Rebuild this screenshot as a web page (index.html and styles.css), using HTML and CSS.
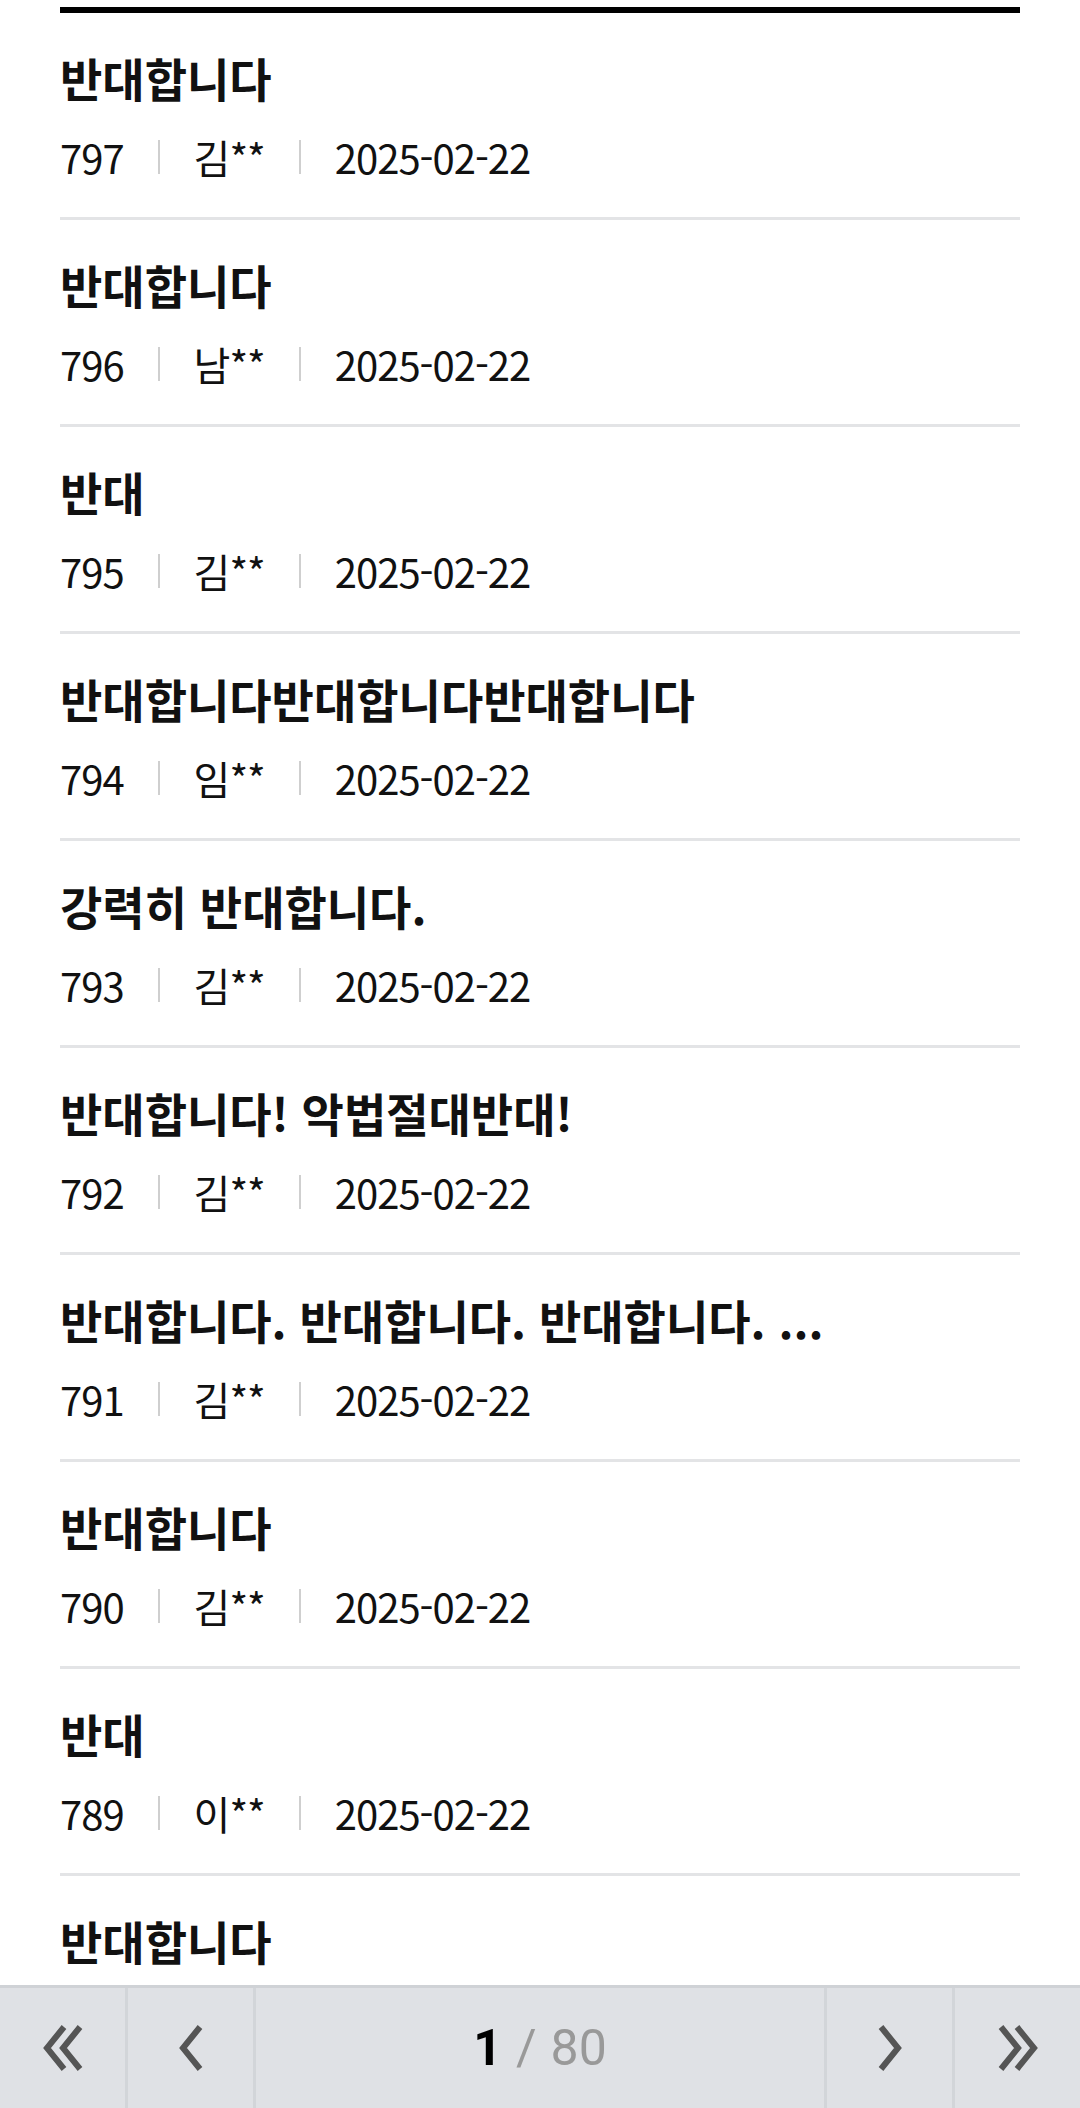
FILE: index.html
```html
<!DOCTYPE html>
<html lang="ko">
<head>
  <meta charset="UTF-8">
  <title>의견 목록</title>
  <meta name="viewport" content="width=device-width, initial-scale=1.0">
  <link rel="stylesheet" href="styles.css">
</head>
<body>
  <!-- 의견 목록 -->
  <main class="board">
    <ul class="post-list">
      <li class="post">
        <p class="post-title">반대합니다</p>
        <p class="post-meta"><span>797</span><i class="bar"></i><span>김**</span><i class="bar"></i><span>2025-02-22</span></p>
      </li>
      <li class="post">
        <p class="post-title">반대합니다</p>
        <p class="post-meta"><span>796</span><i class="bar"></i><span>남**</span><i class="bar"></i><span>2025-02-22</span></p>
      </li>
      <li class="post">
        <p class="post-title">반대</p>
        <p class="post-meta"><span>795</span><i class="bar"></i><span>김**</span><i class="bar"></i><span>2025-02-22</span></p>
      </li>
      <li class="post">
        <p class="post-title">반대합니다반대합니다반대합니다</p>
        <p class="post-meta"><span>794</span><i class="bar"></i><span>임**</span><i class="bar"></i><span>2025-02-22</span></p>
      </li>
      <li class="post">
        <p class="post-title">강력히 반대합니다.</p>
        <p class="post-meta"><span>793</span><i class="bar"></i><span>김**</span><i class="bar"></i><span>2025-02-22</span></p>
      </li>
      <li class="post">
        <p class="post-title">반대합니다! 악법절대반대!</p>
        <p class="post-meta"><span>792</span><i class="bar"></i><span>김**</span><i class="bar"></i><span>2025-02-22</span></p>
      </li>
      <li class="post">
        <p class="post-title">반대합니다. 반대합니다. 반대합니다. ...</p>
        <p class="post-meta"><span>791</span><i class="bar"></i><span>김**</span><i class="bar"></i><span>2025-02-22</span></p>
      </li>
      <li class="post">
        <p class="post-title">반대합니다</p>
        <p class="post-meta"><span>790</span><i class="bar"></i><span>김**</span><i class="bar"></i><span>2025-02-22</span></p>
      </li>
      <li class="post">
        <p class="post-title">반대</p>
        <p class="post-meta"><span>789</span><i class="bar"></i><span>이**</span><i class="bar"></i><span>2025-02-22</span></p>
      </li>
      <li class="post">
        <p class="post-title">반대합니다</p>
        <p class="post-meta"><span>788</span><i class="bar"></i><span>박**</span><i class="bar"></i><span>2025-02-22</span></p>
      </li>
    </ul>
  </main>

  <!-- 하단 페이지 이동 -->
  <nav class="pager">
    <a class="pager-btn" href="#" aria-label="처음">
      <svg width="42" height="46" viewBox="0 0 42 46"><polyline points="22,2 5,23 22,44" /><polyline points="38,2 21,23 38,44" /></svg>
    </a>
    <a class="pager-btn" href="#" aria-label="이전">
      <svg width="26" height="46" viewBox="0 0 26 46"><polyline points="22,2 5,23 22,44" /></svg>
    </a>
    <div class="pager-count"><b>1</b><span class="slash">/</span><span class="total">80</span></div>
    <a class="pager-btn" href="#" aria-label="다음">
      <svg width="26" height="46" viewBox="0 0 26 46"><polyline points="4,2 21,23 4,44" /></svg>
    </a>
    <a class="pager-btn" href="#" aria-label="마지막">
      <svg width="42" height="46" viewBox="0 0 42 46"><polyline points="4,2 21,23 4,44" /><polyline points="20,2 37,23 20,44" /></svg>
    </a>
  </nav>
</body>
</html>
```

FILE: styles.css
```css
body {
  margin: 0;
  background: #fff;
  color: #111;
  font-family: "Noto Sans CJK KR", "Noto Sans", sans-serif;
}

/* List */
.board {
  padding: 7px 60px 0;
}
.post-list {
  list-style: none;
  margin: 0;
  padding: 0;
  border-top: 6px solid #000;
}
.post {
  padding: 36px 0 36px;
  border-bottom: 3px solid #e3e4e6;
}
.post-title {
  margin: 0;
  font-size: 46px;
  font-weight: 700;
  line-height: 56px;
  white-space: nowrap;
}
.post-meta {
  margin: 28px 0 0;
  display: flex;
  align-items: center;
  font-size: 40px;
  line-height: 48px;
  letter-spacing: -1px;
}
.post-meta .bar {
  width: 2px;
  height: 34px;
  margin: 0 34px;
  background: #cfcfcf;
}

/* Pager fixed to the bottom of the screen */
.pager {
  position: fixed;
  left: 0;
  right: 0;
  bottom: 0;
  height: 120px;
  display: flex;
  background: #dfe1e5;
  border-top: 3px solid #cfd2d6;
}
.pager-btn {
  width: 125px;
  display: flex;
  align-items: center;
  justify-content: center;
  border-right: 3px solid #d2d5d9;
}
.pager-btn:nth-last-child(-n+2) {
  border-right: none;
  border-left: 3px solid #d2d5d9;
}
.pager-btn svg {
  fill: none;
  stroke: #555;
  stroke-width: 6;
}
.pager-count {
  flex: 1;
  display: flex;
  align-items: center;
  justify-content: center;
  font-family: Roboto, "Noto Sans", sans-serif;
  font-size: 50px;
}
.pager-count b {
  color: #000;
  font-weight: 700;
}
.pager-count .slash {
  margin: 0 14px;
  color: #999;
}
.pager-count .total {
  color: #999;
}
```
